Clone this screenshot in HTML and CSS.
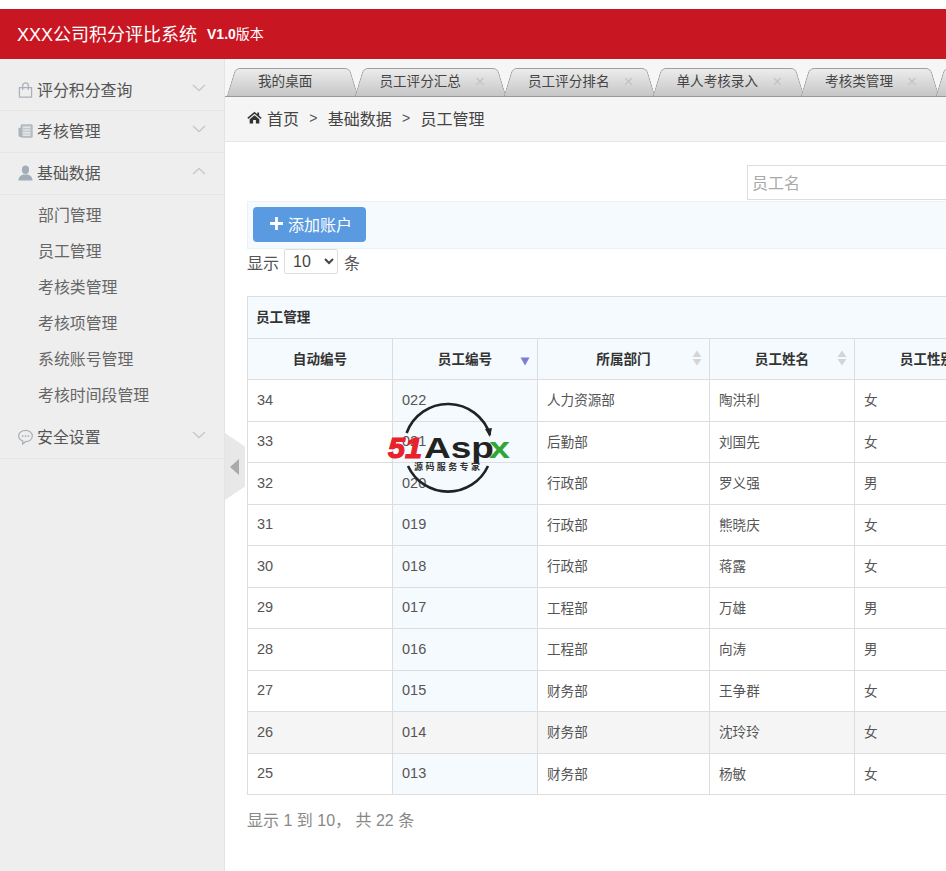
FILE: index.html
```html
<!DOCTYPE html>
<html lang="zh">
<head>
<meta charset="utf-8">
<title>XXX公司积分评比系统</title>
<link rel="stylesheet" href="styles.css">
</head>
<body>
<header class="topbar">
  <span class="brand">XXX公司积分评比系统</span>
  <span class="version"><b>V1.0</b>版本</span>
</header>
<div class="layout">
  <aside class="sidebar">
    <div class="menu-item">
      <svg class="mi" viewBox="0 0 16 16"><path d="M1.500 5.500h13v10h-13z M5 8V3.500a3 3 0 0 1 6 0V8" fill="none" stroke="#a9b0b9" stroke-width="1.300"/></svg>
      <span>评分积分查询</span>
      <svg class="chev" viewBox="0 0 14 8"><path d="M1 1l6 5.500 6-5.500" fill="none" stroke="#c8c8c8" stroke-width="1.400"/></svg>
    </div>
    <div class="menu-item">
      <svg class="mi" viewBox="0 0 16 16"><path d="M3.500 1.500h11.500v13h-11.500z" fill="#c4c9cf" stroke="#a2a9b2"/><path d="M.5 4.500h3v10H2.500A2 2 0 0 1 .5 12.500z" fill="#adb3bb"/><path d="M5.500 4h7.500M5.500 7h7.500M5.500 10h7.500M5.500 12.500h7.500" stroke="#eee" stroke-width="1.100"/></svg>
      <span>考核管理</span>
      <svg class="chev" viewBox="0 0 14 8"><path d="M1 1l6 5.500 6-5.500" fill="none" stroke="#c8c8c8" stroke-width="1.400"/></svg>
    </div>
    <div class="menu-item">
      <svg class="mi" viewBox="0 0 16 16"><ellipse cx="8" cy="4.500" rx="3.800" ry="4.500" fill="#a3adb9"/><path d="M.5 16c0-4 2.500-5.500 5-6.500h5c2.500 1 5 2.500 5 6.500z" fill="#a3adb9"/></svg>
      <span>基础数据</span>
      <svg class="chev" viewBox="0 0 14 8"><path d="M1 7l6-5.500 6 5.500" fill="none" stroke="#c8c8c8" stroke-width="1.400"/></svg>
    </div>
    <ul class="submenu">
      <li>部门管理</li>
      <li>员工管理</li>
      <li>考核类管理</li>
      <li>考核项管理</li>
      <li>系统账号管理</li>
      <li>考核时间段管理</li>
    </ul>
    <div class="menu-item">
      <svg class="mi" viewBox="0 0 16 16"><path d="M8 1c4 0 7.300 2.500 7.300 6s-3.300 6-7.300 6l-3 2.500v-3.200C2.300 11.200.7 9.300.7 7 .7 3.500 4 1 8 1z" fill="none" stroke="#a9b0b9" stroke-width="1.300"/><circle cx="5" cy="7" r="1" fill="#a9b0b9"/><circle cx="8" cy="7" r="1" fill="#a9b0b9"/><circle cx="11" cy="7" r="1" fill="#a9b0b9"/></svg>
      <span>安全设置</span>
      <svg class="chev" viewBox="0 0 14 8"><path d="M1 1l6 5.500 6-5.500" fill="none" stroke="#c8c8c8" stroke-width="1.400"/></svg>
    </div>
  </aside>
  <div class="handle"><span class="handle-arrow"></span></div>
  <main class="main">
    <nav class="tabs">
      <div class="tab tab-first"><span class="tab-label">我的桌面</span></div>
      <div class="tab"><span class="tab-label">员工评分汇总</span><i class="tab-x">×</i></div>
      <div class="tab"><span class="tab-label">员工评分排名</span><i class="tab-x">×</i></div>
      <div class="tab"><span class="tab-label">单人考核录入</span><i class="tab-x">×</i></div>
      <div class="tab"><span class="tab-label">考核类管理</span><i class="tab-x">×</i></div>
      <div class="tab"><span class="tab-label">考核项管理</span></div>
    </nav>
    <div class="crumbs">
      <svg class="home" viewBox="0 0 16 14"><path d="M8 .8L.3 7.400l1 1.100L8 2.900l6.700 5.600 1-1.100-2.700-2.300V1.500h-2v2.100z" fill="#333"/><path d="M2.800 8.800L8 4.500l5.200 4.300V13.500H9.500V9.800h-3v3.700H2.800z" fill="#333"/></svg>
      <span>首页</span><span class="sep">&gt;</span><span>基础数据</span><span class="sep">&gt;</span><span>员工管理</span>
    </div>
    <section class="content">
      <div class="search-row"><input class="search" type="text" placeholder="员工名"></div>
      <div class="toolbar">
        <button class="add" type="button"><svg class="plus" viewBox="0 0 14 14"><path d="M7 0v14M0 7h14" stroke="#fff" stroke-width="3"/></svg>添加账户</button>
      </div>
      <div class="length">显示 <select class="len-select"><option>10</option></select> 条</div>
      <table class="grid">
        <colgroup><col class="c1"><col class="c1"><col class="c3"><col class="c1"><col class="c1"></colgroup>
        <thead>
          <tr class="cap"><th colspan="5">员工管理</th></tr>
          <tr class="heads">
            <th>自动编号</th>
            <th class="sortable">员工编号<svg class="sort" viewBox="0 0 10 16"><path d="M.500 7.500h9L5 15.500z" fill="#7d7dd6"/></svg></th>
            <th class="sortable">所属部门<svg class="sort" viewBox="0 0 10 16"><path d="M5 .5l4.500 6.500h-9zM.500 9h9L5 15.500z" fill="#d5d5d5"/></svg></th>
            <th class="sortable">员工姓名<svg class="sort" viewBox="0 0 10 16"><path d="M5 .5l4.500 6.500h-9zM.500 9h9L5 15.500z" fill="#d5d5d5"/></svg></th>
            <th>员工性别</th>
          </tr>
        </thead>
        <tbody>
          <tr><td>34</td><td class="sorted">022</td><td>人力资源部</td><td>陶洪利</td><td>女</td></tr>
          <tr><td>33</td><td class="sorted">021</td><td>后勤部</td><td>刘国先</td><td>女</td></tr>
          <tr><td>32</td><td class="sorted">020</td><td>行政部</td><td>罗义强</td><td>男</td></tr>
          <tr><td>31</td><td class="sorted">019</td><td>行政部</td><td>熊晓庆</td><td>女</td></tr>
          <tr><td>30</td><td class="sorted">018</td><td>行政部</td><td>蒋露</td><td>女</td></tr>
          <tr><td>29</td><td class="sorted">017</td><td>工程部</td><td>万雄</td><td>男</td></tr>
          <tr><td>28</td><td class="sorted">016</td><td>工程部</td><td>向涛</td><td>男</td></tr>
          <tr><td>27</td><td class="sorted">015</td><td>财务部</td><td>王争群</td><td>女</td></tr>
          <tr class="hover"><td>26</td><td>014</td><td>财务部</td><td>沈玲玲</td><td>女</td></tr>
          <tr><td>25</td><td class="sorted">013</td><td>财务部</td><td>杨敏</td><td>女</td></tr>
        </tbody>
      </table>
      <p class="info">显示 1 到 10， 共 22 条</p>
    </section>
  </main>
  <svg class="watermark" viewBox="0 0 130 100">
    <path d="M19.600 39A44 44 0 0 1 103 41" fill="none" stroke="#222" stroke-width="2.600"/>
    <path d="M98 35l7-1-2 9z" fill="#222"/>
    <path d="M101 72A44 44 0 0 1 21 72" fill="none" stroke="#222" stroke-width="2.600"/>
    <text class="wm-51" x="1" y="64" textLength="34" lengthAdjust="spacingAndGlyphs">51</text>
    <text class="wm-asp" x="37" y="64" textLength="70" lengthAdjust="spacingAndGlyphs">Asp</text>
    <text class="wm-x" x="102" y="64" textLength="21" lengthAdjust="spacingAndGlyphs">x</text>
    <text class="wm-sub" x="27" y="76" textLength="66">源码服务专家</text>
  </svg>
</div>
</body>
</html>
```

FILE: styles.css
```css
* { box-sizing: border-box; }
html, body { margin: 0; height: 100%; }
body {
  padding-top: 9px;
  width: 946px;
  height: 871px;
  overflow: hidden;
  background: #fff;
  color: #333;
  font-family: "Liberation Sans", "Noto Sans CJK SC", sans-serif;
  font-size: 14px;
}
.topbar {
  height: 50px;
  background: #c81623;
  color: #fff;
  display: flex;
  align-items: center;
  padding: 0 0 2px 17px;
  gap: 10px;
}
.brand { font-size: 18px; }
.version { font-size: 14px; }
.layout { position: relative; display: flex; height: 812px; }

.sidebar {
  flex: 0 0 225px;
  background: #eee;
  border-right: 1px solid #e4e4e4;
  padding-top: 10px;
  color: #555;
}
.menu-item {
  display: flex;
  align-items: center;
  height: 42px;
  padding: 0 18px 2px;
  font-size: 15.9px;
  border-bottom: 1px solid #e6e6e6;
}
.menu-item:first-child { padding-bottom: 0; }
.mi { width: 15px; height: 16px; margin-right: 4px; flex: none; }
.chev { width: 14px; height: 8px; margin-left: auto; margin-top: -3px; }
.submenu { list-style: none; margin: 0; padding: 3px 0; }
.submenu li {
  height: 36px;
  line-height: 36px;
  padding-left: 38px;
  font-size: 15.9px;
  color: #666;
}
.handle {
  position: absolute;
  left: 225px;
  top: 374px;
  width: 20px;
  height: 67px;
  background: #e8e8e8;
  clip-path: polygon(0 0, 100% 20%, 100% 80%, 0 100%);
  display: flex;
  align-items: center;
  padding-left: 5px;
}
.handle-arrow {
  width: 0;
  height: 0;
  border-style: solid;
  border-width: 8px 9px 8px 0;
  border-color: transparent #aaa transparent transparent;
}

.main { flex: 1; min-width: 0; overflow: hidden; }
.tabs {
  display: flex;
  height: 38px;
  padding: 9px 0 0 1px;
  background: #f6f6f6;
  border-bottom: 1px solid #999;
}
.tab {
  position: relative;
  flex: none;
  height: 28px;
  margin-right: -5px;
  padding: 0 47px 0 25px;
  line-height: 27px;
  font-size: 13.6px;
  color: #444;
}
.tab-first { padding-left: 32px; }
.tab::before, .tab::after {
  content: "";
  position: absolute;
  top: 0;
  bottom: 0;
  width: 55%;
  z-index: 0;
  background: linear-gradient(#ececec, #c6c6c6);
  border-top: 1px solid #a0a0a0;
}
.tab::before {
  left: 5px;
  transform: skewX(-17deg);
  border-left: 1px solid #999;
  border-top-left-radius: 5px;
}
.tab::after {
  right: 5px;
  transform: skewX(17deg);
  border-right: 1px solid #999;
  border-top-right-radius: 5px;
}
.tab-label { position: relative; z-index: 1; }
.tab-x {
  position: absolute;
  z-index: 1;
  right: 23px;
  top: 0;
  font-style: normal;
  font-size: 17px;
  color: #c4c4c4;
}
.crumbs {
  display: flex;
  align-items: center;
  height: 45px;
  padding: 0 0 3px 22px;
  background: #f5f5f5;
  border-bottom: 1px solid #e6e6e6;
  font-size: 16px;
  color: #444;
}
.home { width: 15px; height: 13px; margin-right: 5px; }
.sep { margin: 0 10.300px; font-size: 14px; color: #555; }

.content { width: 1200px; padding: 23px 0 0 22px; }
.search-row { padding-left: 500px; height: 36px; }
.search {
  display: block;
  width: 400px;
  height: 35px;
  padding: 2px 4px 0;
  border: 1px solid #ddd;
  font: 16px "Liberation Sans", "Noto Sans CJK SC", sans-serif;
}
.search::placeholder { color: #aaa; }
.toolbar {
  height: 48px;
  padding: 5px;
  background: #f5fafe;
  border: 1px solid #eef1f4;
}
.add {
  display: flex;
  align-items: center;
  width: 113px;
  height: 35px;
  padding: 0 0 2px 17px;
  border: 0;
  border-radius: 4px;
  background: #5a9ae0;
  color: #fff;
  font: 16px "Liberation Sans", "Noto Sans CJK SC", sans-serif;
}
.plus { width: 13px; height: 13px; margin-right: 5px; }
.length {
  height: 26px;
  padding-bottom: 1px;
  display: flex;
  align-items: center;
  gap: 5px;
  font-size: 16px;
  color: #555;
}
.len-select {
  width: 54px;
  height: 25px;
  margin-right: 1px;
  padding-left: 4px;
  border: 1px solid #ddd;
  border-radius: 2px;
  background: #fff;
  color: #444;
  font: 16px "Liberation Sans", sans-serif;
}
.grid {
  margin-top: 21px;
  width: 752px;
  table-layout: fixed;
  border-collapse: collapse;
  font-size: 13.6px;
  color: #555;
}
.c1 { width: 145px; }
.c3 { width: 172px; }
.grid th, .grid td { border: 1px solid #ddd; padding: 0 9px 2px; }
.grid th { background: #f5fafe; color: #333; position: relative; padding-bottom: 3px; }
.cap th { height: 42px; text-align: left; padding-left: 8px; }
.heads th { height: 41px; text-align: center; }
.grid td { height: 41.500px; }
.grid td:nth-child(-n+2) { font-size: 14.500px; padding-bottom: 1px; }
.grid td.sorted { background: #f5fafe; }
.hover td { background: #f5f5f5; }
.sort {
  position: absolute;
  right: 7px;
  top: 11px;
  width: 10px;
  height: 16px;
}
.info { margin: 18px 0 0; font-size: 16px; color: #888; line-height: 16px; }

.watermark {
  position: absolute;
  left: 387px;
  top: 335px;
  width: 130px;
  height: 100px;
  pointer-events: none;
}
.wm-51 { font: italic 900 29px "Liberation Sans", sans-serif; fill: #e8222a; stroke: #e8222a; stroke-width: 1.200px; }
.wm-asp { font: bold 30px "Liberation Sans", sans-serif; fill: #222; }
.wm-x { font: bold 30px "Liberation Sans", sans-serif; fill: #33a532; }
.wm-sub { font: bold 9px "Noto Sans CJK SC", sans-serif; fill: #333; }
```
